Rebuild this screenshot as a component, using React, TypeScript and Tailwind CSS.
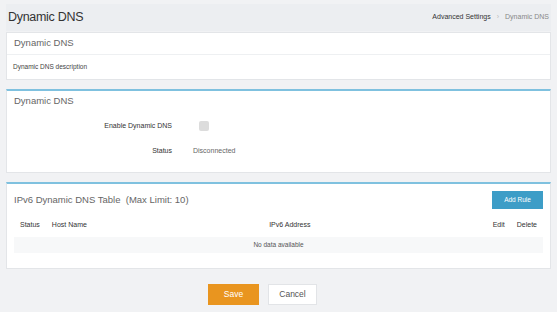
import React from "react";

export default function App() {
  return (
    <div
      className="w-[557px] h-[312px] bg-[#f1f2f4] text-[#555] overflow-hidden"
      style={{ fontFamily: '"Liberation Sans", Arial, sans-serif' }}
    >
      <div className="px-[6px] pt-[4px]">
        <div className="flex items-center justify-between h-[27px] bg-[#eceef1] px-[2px]">
          <div className="text-[12.5px] text-[#333] tracking-[-0.3px]">Dynamic DNS</div>
          <div className="flex items-center gap-[6px] text-[7px]">
            <span className="text-[#333]">Advanced Settings</span>
            <span className="text-[#bbb]">›</span>
            <span className="text-[#888]">Dynamic DNS</span>
          </div>
        </div>

        <div className="bg-white border border-[#e3e5e8] mt-[1px]">
          <div className="h-[22px] flex items-center px-[7px] border-b border-[#eef0f2] text-[9.5px] text-[#666]">
            Dynamic DNS
          </div>
          <div className="h-[24px] flex items-center px-[6px] text-[6.5px] text-[#444]">
            Dynamic DNS description
          </div>
        </div>

        <div className="bg-white border border-[#e3e5e8] border-t-2 border-t-[#7fc1df] mt-[9px] h-[84px]">
          <div className="h-[20px] flex items-center px-[7px] text-[9.5px] text-[#666]">Dynamic DNS</div>
          <div className="flex items-center h-[22px] mt-[4px]">
            <div className="w-[165px] text-right text-[7px] text-[#333]">Enable Dynamic DNS</div>
            <div className="ml-[27px] w-[10px] h-[10px] rounded-[2px] bg-[#dcdcdc]" />
          </div>
          <div className="flex items-center h-[22px] mt-[3px]">
            <div className="w-[165px] text-right text-[7px] text-[#333]">Status</div>
            <div className="ml-[21px] text-[7px] text-[#666]">Disconnected</div>
          </div>
        </div>

        <div className="bg-white border border-[#e3e5e8] border-t-2 border-t-[#7fc1df] mt-[9px] h-[87px] px-[7px]">
          <div className="flex items-center justify-between h-[26px] mt-[3px]">
            <div className="text-[9.5px] text-[#666]">IPv6 Dynamic DNS Table&nbsp; (Max Limit: 10)</div>
            <div className="w-[51px] h-[18px] bg-[#3d9dc7] text-white text-[6.5px] flex items-center justify-center">
              Add Rule
            </div>
          </div>
          <div className="flex items-center h-[24px] text-[7px] text-[#333] px-[6px]">
            <span>Status</span>
            <span className="ml-[12px]">Host Name</span>
            <span className="flex-1 text-center">IPv6 Address</span>
            <span>Edit</span>
            <span className="ml-[12px]">Delete</span>
          </div>
          <div className="h-[16px] bg-[#f7f8f9] flex items-center justify-center text-[6.5px] text-[#555]">
            No data available
          </div>
        </div>

        <div className="flex justify-center gap-[9px] mt-[15px]">
          <div className="w-[51px] h-[21px] bg-[#e9951f] text-white text-[8.5px] flex items-center justify-center ml-[-32px]">
            Save
          </div>
          <div className="w-[49px] h-[21px] bg-white border border-[#e2e4e7] text-[8.5px] text-[#555] flex items-center justify-center">
            Cancel
          </div>
        </div>
      </div>
    </div>
  );
}
